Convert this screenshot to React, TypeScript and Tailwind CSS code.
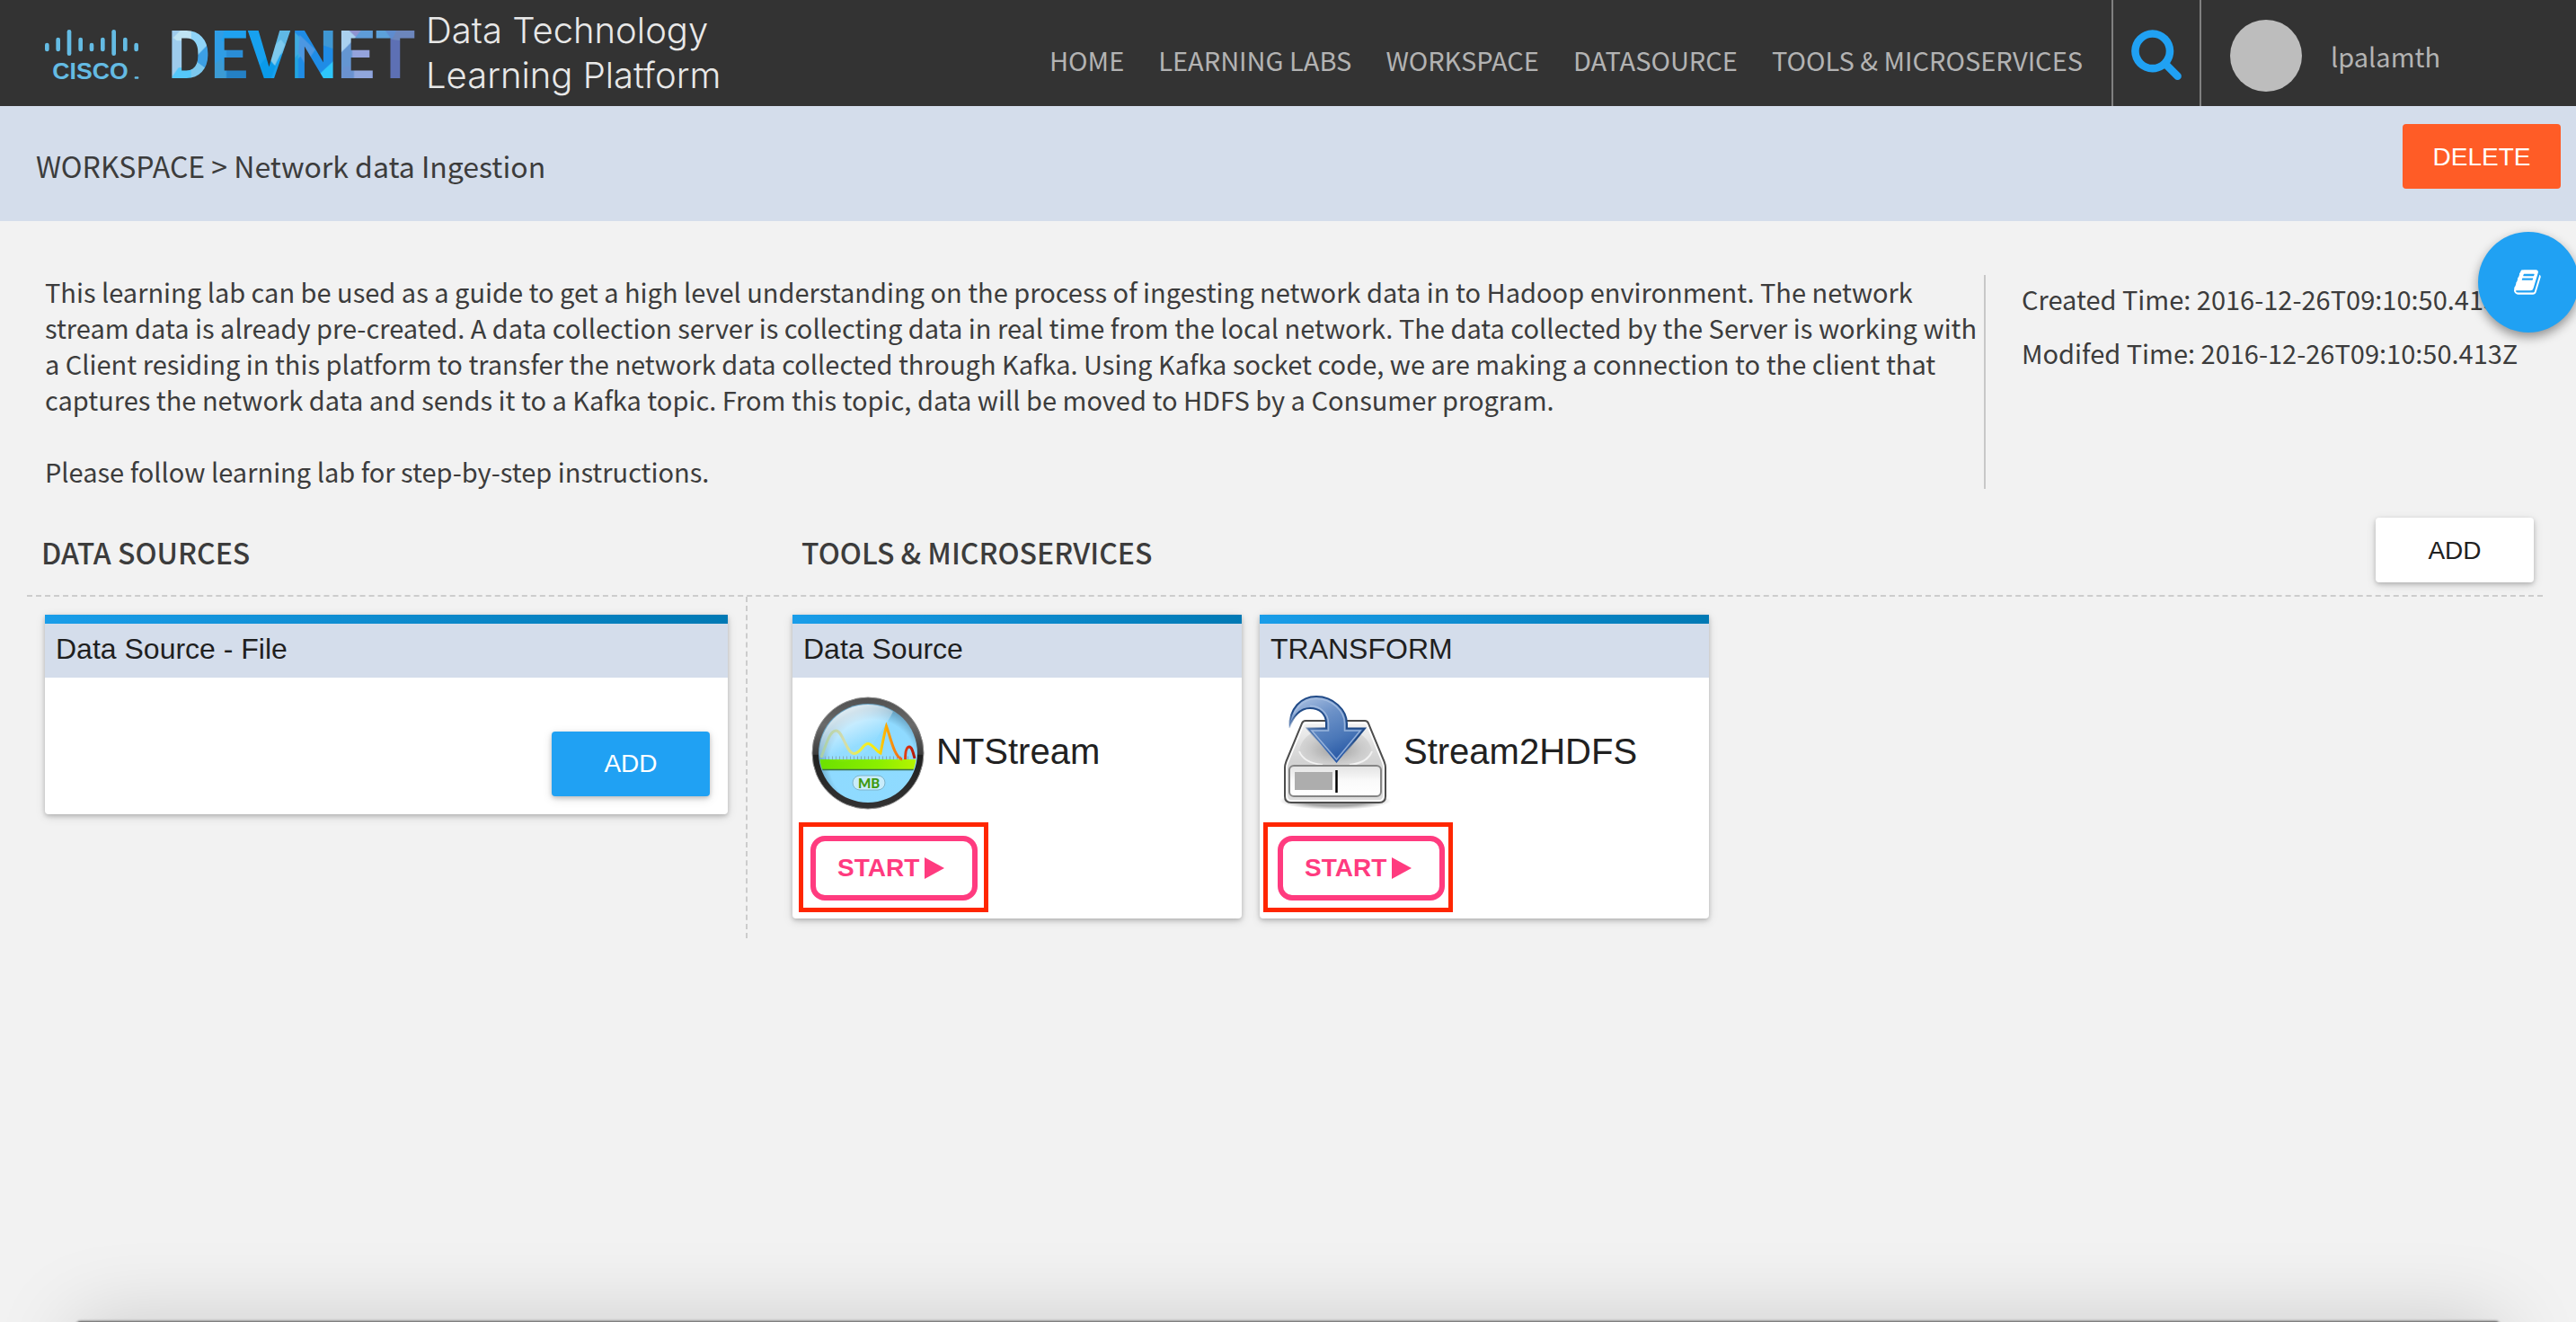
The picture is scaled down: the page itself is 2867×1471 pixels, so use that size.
import type { ReactNode } from "react";

const SOURCE = "font-['Noto_Sans_CJK_SC',sans-serif]";
const HELVETICA = "font-['Liberation_Sans',sans-serif]";

const NAV = ["HOME", "LEARNING LABS", "WORKSPACE", "DATASOURCE", "TOOLS & MICROSERVICES"];

const CISCO_BARS: [number, number, number][] = [
  [37, 113, 142],
  [74, 95, 142],
  [111, 69, 156],
  [149, 95, 142],
  [186, 113, 142],
  [223, 95, 142],
  [260, 69, 156],
  [298, 95, 142],
  [335, 113, 142],
];

const FACETS: [string, string][] = [
  ["0,0 900,0 900,180 0,180", "#3f97d3"],
  ["0,0 150,0 150,180 0,180", "#9ecbec"],
  ["18,30 48,0 78,0 78,40 30,40", "#bfe4f3"],
  ["78,0 150,0 150,40 98,90 78,34", "#8fd4f8"],
  ["98,90 150,36 150,150 98,112", "#3c9fe4"],
  ["78,180 78,130 98,112 150,150 150,180", "#7cc8ee"],
  ["0,180 36,130 78,130 78,180", "#55c8fa"],
  ["143,0 264,0 264,180 143,180", "#2f9de6"],
  ["190,0 264,0 264,42 180,42", "#1fa1ef"],
  ["196,66 264,66 264,110 196,110", "#2a8dd6"],
  ["143,130 180,98 200,180 143,180", "#3c9bd4"],
  ["196,130 264,130 264,180 196,180", "#2480c4"],
  ["264,0 412,0 412,180 264,180", "#17a1ef"],
  ["350,0 412,0 412,60 372,90 340,60", "#5fb8e4"],
  ["330,80 378,36 392,54 356,126 330,104", "#7ecaee"],
  ["300,130 332,92 360,126 340,180 310,180", "#0a9ae9"],
  ["412,0 562,0 562,180 412,180", "#1f8ce6"],
  ["412,0 452,40 452,80 412,130", "#3fabe0"],
  ["440,20 492,70 460,120 436,80", "#4c97e2"],
  ["412,110 436,84 436,180 412,180", "#22a4e0"],
  ["505,0 562,0 562,70 505,50", "#3f97d3"],
  ["508,150 562,100 562,180 530,180", "#2ec6fa"],
  ["562,0 684,0 684,180 562,180", "#6496d2"],
  ["562,0 600,0 630,28 562,96", "#a9d0ef"],
  ["600,0 650,0 628,28", "#8f93d0"],
  ["650,0 684,0 684,42 616,42", "#5e9cd8"],
  ["616,64 684,64 684,112 616,112", "#94a3dc"],
  ["562,180 590,126 622,126 622,180", "#6a92d0"],
  ["622,126 684,126 684,180 622,180", "#90a6dc"],
  ["684,0 830,0 830,180 684,180", "#5d70b4"],
  ["684,0 730,0 754,24 722,46 684,46", "#5ca1da"],
  ["722,0 776,0 748,36", "#5e8ccf"],
  ["766,0 830,0 830,46 750,36", "#6c86bc"],
];

function Logo() {
  return (
    <svg viewBox="0 0 1290 300" className="h-[100px] w-[430px]" role="img" aria-label="Cisco DevNet">
      <defs>
        <pattern id="facets" patternUnits="userSpaceOnUse" x="440" y="66" width="900" height="180">
          {FACETS.map(([points, fill], i) => (
            <polygon key={i} points={points} fill={fill} />
          ))}
        </pattern>
      </defs>
      {CISCO_BARS.map(([x, top, bottom]) => (
        <rect key={x} x={x - 7} y={top} width="14" height={bottom - top} rx="7" fill="#64bbe3" />
      ))}
      <text x="55" y="234" fontSize="80" className="font-['Liberation_Sans',sans-serif] font-bold" fill="#64bbe3">
        CISCO
      </text>
      <rect x="329" y="226" width="14" height="7" rx="3" fill="#64bbe3" />
      <text x="440" y="232" fontSize="220" className="font-['Roboto',sans-serif] font-bold" fill="url(#facets)">
        DEVNET
      </text>
    </svg>
  );
}

function SearchIcon() {
  return (
    <svg viewBox="0 0 1792 1792" className="size-[60px] fill-[#20a1f3]" aria-hidden="true">
      <path d="M1216 832q0-185-131.5-316.5t-316.5-131.5-316.5 131.5-131.5 316.5 131.5 316.5 316.5 131.5 316.5-131.5 131.5-316.5zm512 832q0 52-38 90t-90 38q-54 0-90-38l-343-342q-179 124-399 124-143 0-273.5-55.5t-225-150-150-225-55.5-273.5 55.5-273.5 150-225 225-150 273.5-55.5 273.5 55.5 225 150 150 225 55.5 273.5q0 220-124 399l343 343q37 37 37 90z" />
    </svg>
  );
}

function BookIcon() {
  return (
    <svg viewBox="0 0 1792 1792" className="size-8 fill-white" aria-hidden="true">
      <path d="M1639 478q40 57 18 129l-275 906q-19 64-76.5 107.5t-122.5 43.5h-923q-77 0-148.5-53.5t-99.5-131.5q-24-67-2-127 0-4 3-27t4-37q1-8-3-21.5t-3-19.5q2-11 8-21t16.5-23.5 16.5-23.5q23-38 45-91.5t30-91.5q3-10 .5-30t-.5-28q3-11 17-28t17-23q21-36 42-92t25-90q1-9-2.5-32t.5-28q4-13 22-30.5t22-22.5q19-26 42.5-84.5t27.5-96.5q1-8-3-25.5t-2-26.5q2-8 9-18t18-23 17-21q8-12 16.5-30.5t15-35 16-36 19.5-32 26.5-23.5 36-11.5 47.5 5.5l-1 3q38-9 51-9h761q74 0 114 56t18 130l-274 906q-36 119-71.5 153.5t-128.5 34.5h-869q-27 0-38 15-11 16-1 43 24 70 144 70h923q29 0 56-15.5t35-41.5l300-987q7-22 5-57 38 15 59 43zm-1064 2q-4 13 2 22.5t20 9.5h608q13 0 25.5-9.5t16.5-22.5l21-64q4-13-2-22.5t-20-9.5h-608q-13 0-25.5 9.5t-16.5 22.5zm-83 256q-4 13 2 22.5t20 9.5h608q13 0 25.5-9.5t16.5-22.5l21-64q4-13-2-22.5t-20-9.5h-608q-13 0-25.5 9.5t-16.5 22.5z" />
    </svg>
  );
}

function TrafficIcon() {
  return (
    <svg viewBox="0 0 128 128" className="size-32" aria-hidden="true">
      <defs>
        <linearGradient id="ring" x1="0" y1="0" x2="0" y2="1">
          <stop offset="0" stopColor="#505050" />
          <stop offset="0.25" stopColor="#6a6a6a" />
          <stop offset="0.51" stopColor="#3c3c3c" />
          <stop offset="0.52" stopColor="#202020" />
          <stop offset="1" stopColor="#333333" />
        </linearGradient>
        <radialGradient id="glass" cx="0.55" cy="0.6" r="0.55">
          <stop offset="0" stopColor="#8edcff" />
          <stop offset="0.8" stopColor="#8fdaff" />
          <stop offset="1" stopColor="#6aa4c4" />
        </radialGradient>
        <linearGradient id="gloss" x1="0.1" y1="0" x2="0.6" y2="0.8">
          <stop offset="0.1" stopColor="#ffffff" stopOpacity="0.95" />
          <stop offset="0.45" stopColor="#ffffff" stopOpacity="0.6" />
          <stop offset="0.9" stopColor="#ffffff" stopOpacity="0.05" />
        </linearGradient>
        <linearGradient id="band" x1="0" y1="0" x2="1" y2="0">
          <stop offset="0" stopColor="#6be000" />
          <stop offset="0.6" stopColor="#8aee00" />
          <stop offset="1" stopColor="#b8f400" />
        </linearGradient>
        <linearGradient id="curve" gradientUnits="userSpaceOnUse" x1="12" y1="0" x2="116" y2="0">
          <stop offset="0" stopColor="#a8cfa8" />
          <stop offset="0.25" stopColor="#d3dcae" />
          <stop offset="0.42" stopColor="#eef03c" />
          <stop offset="0.6" stopColor="#ffe800" />
          <stop offset="0.7" stopColor="#ffa800" />
          <stop offset="0.85" stopColor="#f06a1c" />
          <stop offset="0.92" stopColor="#d83010" />
          <stop offset="1" stopColor="#b01808" />
        </linearGradient>
        <clipPath id="dial">
          <circle cx="64" cy="64" r="54" />
        </clipPath>
      </defs>
      <circle cx="64" cy="64" r="62" fill="url(#ring)" stroke="#8a8a8a" strokeWidth="1" />
      <circle cx="64" cy="64" r="55" fill="url(#glass)" />
      <g clipPath="url(#dial)">
        <path d="M16 69.500H112" stroke="#7fa6b8" strokeWidth="4" strokeDasharray="1 3" />
        <path d="M8 71H120V82H8Z" fill="url(#band)" />
        <path d="M8 82.500H120" stroke="#39714a" strokeWidth="1.500" />
        <path d="M4 64C40 84 60 68 72 50C84 32 92 20 96 8H4Z" fill="url(#gloss)" />
        <path
          d="M12 69C18 52 22 39 28.500 39C36 39 40 64 48 64.500C56 65 58 53.500 64 53.500C69 53.500 73 62 78 64C80 54 82 43 84.500 34C89 46 93 68 102 71M105.500 71C105.500 62 107 57 110 57C113 57 114.500 64 116 70"
          fill="none"
          stroke="url(#curve)"
          strokeWidth="3"
        />
      </g>
      <rect x="47" y="89" width="36" height="16" rx="8" fill="#c9ecfb" stroke="#7eb4ca" strokeWidth="1" />
      <text
        x="65"
        y="103"
        textAnchor="middle"
        fontSize="15"
        className="font-['Lato',sans-serif] font-black"
        fill="#3f9a12"
      >
        MB
      </text>
    </svg>
  );
}

function DriveIcon() {
  return (
    <svg viewBox="0 0 128 128" className="size-32" aria-hidden="true">
      <defs>
        <linearGradient id="lid" x1="0" y1="0" x2="0" y2="1">
          <stop offset="0" stopColor="#f4f4f4" />
          <stop offset="0.5" stopColor="#d2d2d2" />
          <stop offset="1" stopColor="#dedede" />
        </linearGradient>
        <radialGradient id="platter" cx="0.5" cy="0.6" r="0.6">
          <stop offset="0" stopColor="#a0a0a0" />
          <stop offset="0.6" stopColor="#cacaca" />
          <stop offset="1" stopColor="#dcdcdc" />
        </radialGradient>
        <linearGradient id="front" x1="0" y1="0" x2="0" y2="1">
          <stop offset="0" stopColor="#e2e2e2" />
          <stop offset="0.5" stopColor="#fafafa" />
          <stop offset="1" stopColor="#ffffff" />
        </linearGradient>
        <linearGradient id="arrow" x1="0" y1="0" x2="0.5" y2="1">
          <stop offset="0" stopColor="#b4c8e6" />
          <stop offset="0.4" stopColor="#6d92c8" />
          <stop offset="0.75" stopColor="#4a77b8" />
          <stop offset="1" stopColor="#2a5aa6" />
        </linearGradient>
        <linearGradient id="arrowEdge" gradientUnits="userSpaceOnUse" x1="12" y1="38" x2="20" y2="20">
          <stop offset="0" stopColor="#204a87" stopOpacity="0" />
          <stop offset="1" stopColor="#204a87" />
        </linearGradient>
        <radialGradient id="ground">
          <stop offset="0.6" stopColor="#000000" stopOpacity="0.35" />
          <stop offset="1" stopColor="#000000" stopOpacity="0" />
        </radialGradient>
      </defs>
      <ellipse cx="64" cy="117" rx="62" ry="10" fill="url(#ground)" />
      <path
        d="M31 28H97Q100 28 101 31L118.500 73Q120 77 120 80V112Q120 119 113 119H15Q8 119 8 112V80Q8 77 9.500 73L27 31Q28 28 31 28Z"
        fill="url(#lid)"
        stroke="#4d4d4d"
        strokeWidth="2"
      />
      <path
        d="M32 30.500H96Q98.500 30.500 99.500 33L116.500 74Q118 78 118 81V111Q118 117 112 117H16Q10 117 10 111V81Q10 78 11.500 74L28.500 33Q29.500 30.500 32 30.500Z"
        fill="none"
        stroke="#ffffff"
        strokeWidth="1.500"
      />
      <path d="M24 62C26 46 40 36 64 36S102 46 105 62C102 74 86 76 64 76S28 74 24 62Z" fill="url(#platter)" />
      <path d="M24 62C28 72 40 76 50 77M105 62C101 72 90 76 80 77" fill="none" stroke="#f2f2f2" strokeWidth="2" />
      <rect x="13" y="78" width="102" height="34" rx="5" fill="url(#front)" stroke="#858585" strokeWidth="2" />
      <rect x="19" y="85" width="42" height="20" fill="#adadad" />
      <path d="M65.500 83V108" stroke="#000000" strokeWidth="2.500" />
      <path
        d="M13 36C13 14 26 1 43 1C62 1 77 16 77 31V36.500H97L65.500 75L33 36.500H54V31C54 20 46 14 36 14C25 14 17 23 13 36Z"
        fill="url(#arrow)"
        stroke="url(#arrowEdge)"
        strokeWidth="2"
        strokeLinejoin="miter"
      />
      <path
        d="M18 20C24 9 33 3.500 43 3.500C60 3.500 74.500 17 74.500 31V39H92L65.500 71L38 39H56.500V31C56.500 19 47 11.500 36 11.500"
        fill="none"
        stroke="#a9c0e2"
        strokeOpacity="0.8"
        strokeWidth="1.500"
      />
    </svg>
  );
}

function Card({ title, children }: { title: string; children: ReactNode }) {
  return (
    <article className={`${HELVETICA} rounded-b bg-white shadow-[0_2px_5px_rgba(0,0,0,0.2),0_3px_12px_rgba(0,0,0,0.12)]`}>
      <div className="h-[10px] bg-linear-to-r from-[#199de9] to-[#0079b4]" />
      <h3 className="flex h-[60px] items-center bg-[#d4ddeb] px-3 pb-1 text-[32px] text-[#1f1f1f]">{title}</h3>
      {children}
    </article>
  );
}

function ServiceCard({
  title,
  name,
  icon,
  highlight,
}: {
  title: string;
  name: string;
  icon: ReactNode;
  highlight: string;
}) {
  return (
    <div className="w-[500px]">
      <Card title={title}>
        <div className="flex flex-col items-start gap-7 p-5">
          <div className="flex items-center gap-3">
            {icon}
            <span className="pb-1 text-[40px] text-[#212121]">{name}</span>
          </div>
          <div className="relative">
            <button
              type="button"
              className="flex h-[72px] w-[186px] items-center gap-1.5 rounded-[16px] border-6 border-[#ff3b7f] px-6 text-[28px] font-bold text-[#ff3b7f]"
            >
              START
              <svg viewBox="0 0 22 24" className="h-6 w-[22px] shrink-0 fill-[#ff3b7f]" aria-hidden="true">
                <path d="M0 0L22 12L0 24Z" />
              </svg>
            </button>
            <div
              className={`pointer-events-none absolute -top-[15px] -bottom-[13px] border-5 border-[#ff2600] ${highlight}`}
            />
          </div>
        </div>
      </Card>
    </div>
  );
}

export default function App() {
  return (
    <div className={`${SOURCE} relative min-h-screen overflow-hidden bg-[#f2f2f2] text-[29px] leading-[40px] text-[#3c3c3c]`}>
      <header className="flex h-[118px] items-start bg-[#333333] text-[#b3b3b3]">
        <a href="#" className="flex items-start pl-10">
          <span className="pt-[10px]">
            <Logo />
          </span>
          <span className="pt-[9px] pl-1 font-['Inter',sans-serif] text-[40px] leading-[50px] font-light text-[#e8e8e8]">
            Data Technology
            <br />
            Learning Platform
          </span>
        </a>
        <nav className="ml-auto flex gap-[38px] pt-[46px] pr-8">
          {NAV.map((item) => (
            <a key={item} href="#" className="whitespace-nowrap">
              {item}
            </a>
          ))}
        </nav>
        <button
          type="button"
          aria-label="Search"
          className="flex h-[118px] w-[100px] items-center justify-center border-x-2 border-[#808080]"
        >
          <SearchIcon />
        </button>
        <a href="#" className="flex w-[417px] items-center gap-8 pt-[22px] pl-8">
          <span className="size-20 rounded-full bg-[#bdbdbd]" />
          lpalamth
        </a>
      </header>

      <div className="flex h-32 items-center justify-between bg-[#d4ddeb] pr-[17px] pl-10 text-[32px]">
        <p className="pt-1">
          <a href="#">WORKSPACE</a> &gt; Network data Ingestion
        </p>
        <button
          type="button"
          className={`${HELVETICA} mt-5 h-[72px] w-[176px] self-start rounded bg-[#ff5c26] pt-0.5 text-[28px] text-white`}
        >
          DELETE
        </button>
      </div>

      <main>
        <section className="flex pt-[58px]">
          <div className="flex-1 pl-[50px]">
            <p>
              This learning lab can be used as a guide to get a high level understanding on the process of ingesting
              network data in to Hadoop environment. The network stream data is already pre-created. A data collection
              server is collecting data in real time from the local network. The data collected by the Server is working
              with a Client residing in this platform to transfer the network data collected through Kafka. Using Kafka
              socket code, we are making a connection to the client that captures the network data and sends it to a
              Kafka topic. From this topic, data will be moved to HDFS by a Consumer program.
            </p>
            <p className="pt-10">Please follow learning lab for step-by-step instructions.</p>
          </div>
          <div className="mt-0.5 flex w-[659px] flex-col gap-5 border-l-2 border-[#c8c8c8] pt-1.5 pl-10">
            <p>Created Time: 2016-12-26T09:10:50.413Z</p>
            <p>Modifed Time: 2016-12-26T09:10:50.413Z</p>
          </div>
        </section>

        <section className="mr-[37px] ml-[30px]">
          <div className="flex items-center border-b-2 border-dashed border-[#cccccc] pt-8 pb-[14px] text-[32px] font-medium">
            <h2 className="w-2/7 pt-1 pl-4">DATA SOURCES</h2>
            <h2 className="flex-1 pt-1 pl-[62px]">TOOLS &amp; MICROSERVICES</h2>
            <button
              type="button"
              className={`${HELVETICA} mr-[10px] h-[72px] w-[176px] rounded bg-white pt-0.5 text-[28px] font-normal text-[#212121] shadow-[0_2px_5px_rgba(0,0,0,0.2),0_3px_12px_rgba(0,0,0,0.12)]`}
            >
              ADD
            </button>
          </div>
          <div className="flex">
            <div className="w-2/7 px-5 pt-5">
              <Card title="Data Source - File">
                <div className="flex justify-end px-5 pt-[60px] pb-5">
                  <button
                    type="button"
                    className="h-[72px] w-[176px] rounded bg-[#20a1f3] text-[28px] text-white shadow-[0_2px_5px_rgba(0,0,0,0.2),0_3px_12px_rgba(0,0,0,0.12)]"
                  >
                    ADD
                  </button>
                </div>
              </Card>
            </div>
            <div className="flex flex-1 items-start gap-5 border-l-2 border-dashed border-[#cccccc] pt-5 pb-[22px] pl-[50px]">
              <ServiceCard
                title="Data Source"
                name="NTStream"
                icon={<TrafficIcon />}
                highlight="-right-3 -left-[13px]"
              />
              <ServiceCard
                title="TRANSFORM"
                name="Stream2HDFS"
                icon={<DriveIcon />}
                highlight="-right-[9px] -left-4"
              />
            </div>
          </div>
        </section>
      </main>

      <button
        type="button"
        aria-label="Open learning lab"
        className="absolute top-[258px] -right-[3px] flex size-28 items-center justify-center rounded-full bg-[#20a1f3] shadow-[0_5px_12px_rgba(0,0,0,0.4)]"
      >
        <BookIcon />
      </button>

      <div className="absolute inset-x-[84px] -bottom-[199px] h-[200px] rounded-[6px] bg-[#808080] shadow-[0_0_2px_1px_rgba(0,0,0,0.3),0_0_90px_rgba(0,0,0,0.17)]" />
    </div>
  );
}
